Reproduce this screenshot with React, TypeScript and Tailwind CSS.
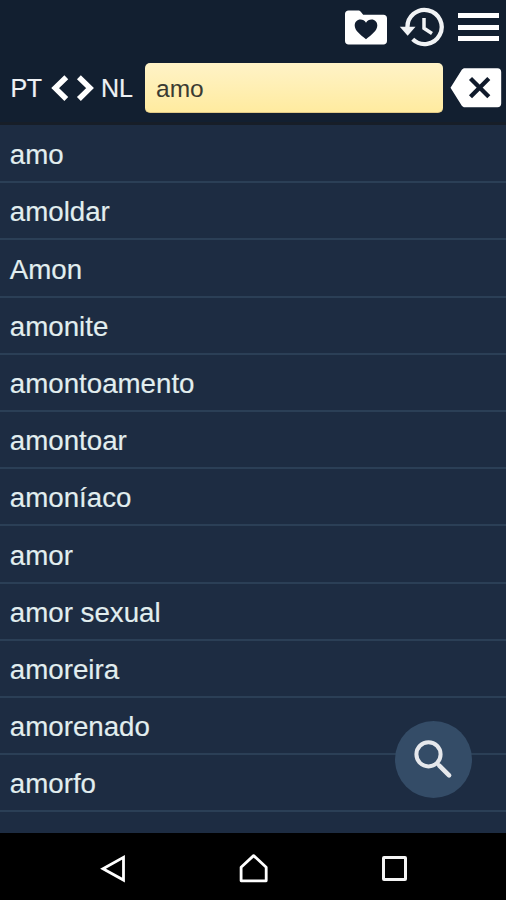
const words = [
  "amo", "amoldar", "Amon", "amonite", "amontoamento", "amontoar",
  "amoníaco", "amor", "amor sexual", "amoreira", "amorenado", "amorfo",
];

function FavoritesIcon() {
  return (
    <svg className="block h-[35px] w-[44px]" viewBox="0 0 44 35" aria-hidden="true">
      <path d="M4.5 .5h9.5c1.3 0 2 .4 2.8 1.3l2.4 2.9h20.300c2 0 3.500 1.500 3.500 3.500V31c0 2-1.500 3.500-3.500 3.500h-35C2.500 34.500 1 33 1 31V4C1 2 2.500 .5 4.500 .5z" fill="#fff" />
      <path d="M22 29.200C16.500 24.600 10.700 20.500 10.700 15.400c0-3.400 2.500-5.900 5.700-5.900 2.400 0 4.400 1.200 5.600 3.200 1.200-2 3.200-3.200 5.600-3.200 3.200 0 5.700 2.500 5.700 5.900 0 5.100-5.800 9.200-11.300 13.800z" fill="#121e30" />
    </svg>
  );
}

function HistoryIcon() {
  return (
    <svg className="block h-[40px] w-[46px]" viewBox="0 0 46 40" fill="none" stroke="#f1f3f5" aria-hidden="true">
      <path d="M8.500 21a17.100 17.100 0 1 1 5.200 11.300" strokeWidth="4.300" />
      <path d="M.8 19.800h15.700l-7.800 9z" fill="#f1f3f5" stroke="none" />
      <path d="M25 11v10.300l8 5.200" strokeWidth="3.500" />
    </svg>
  );
}

function ClearIcon() {
  return (
    <svg className="block h-[40px] w-[52px]" viewBox="0 0 52 40" aria-hidden="true">
      <path d="M14.800 .2h32.700c2.300 0 3.700 1.500 3.700 3.700v31.700c0 2.200-1.400 3.700-3.700 3.700H14.800c-1.300 0-2.300-.6-3-1.500L.5 19.800 11.800 1.700c.7-.9 1.700-1.500 3-1.500z" fill="#fff" />
      <path d="m20.500 10.500 18.300 18.300m0-18.300L20.500 28.800" fill="none" stroke="#101a2b" strokeWidth="4.300" />
    </svg>
  );
}

export default function App() {
  return (
    <div className="relative flex h-[900px] w-[506px] flex-col overflow-hidden bg-[#1d2c42] font-['Liberation_Sans',Arial,sans-serif]">
      <header className="flex h-[125px] shrink-0 flex-col border-b-[3px] border-[#171e28] bg-[#121f30]">
        <div className="flex h-[62px] justify-end pr-[7px]">
          <button className="mt-[10px] mr-[11px] self-start" aria-label="Favoritos"><FavoritesIcon /></button>
          <button className="mt-[7px] mr-[13px] self-start" aria-label="Histórico"><HistoryIcon /></button>
          <button className="mt-[13px] flex h-[28px] w-[41px] flex-col justify-between self-start" aria-label="Menu">
            <span className="h-[5px] w-full bg-white" />
            <span className="h-[5px] w-full bg-white" />
            <span className="h-[5px] w-full bg-white" />
          </button>
        </div>
        <div className="flex h-[51px] items-center">
          <button className="flex h-full w-[145px] items-center pl-[10.500px] text-[25px] leading-none text-[#eef1f4] [-webkit-text-stroke:0.2px]" aria-label="PT NL">
            <span className="w-[39.500px] pt-px text-left tracking-[-0.5px]">PT</span>
            <svg className="h-[28px] w-[45px]" viewBox="0 0 45 28" fill="none" stroke="#fff" strokeWidth="5.500" aria-hidden="true">
              <path d="M16.300 3.200 5.200 14.100l11.100 10.900M28.900 3.200l11.100 10.900-11.100 10.900" />
            </svg>
            <span className="ml-[6px] pt-px">NL</span>
          </button>
          <div className="flex h-[50px] w-[298px] items-center rounded-[5px] border-b border-[#e0c886] bg-linear-to-b from-[#fff3c7] to-[#ffeb9f] pl-[11px] text-[24.500px] leading-none text-[#3b3b32]">
            <span className="pt-[4px]">amo</span>
          </div>
          <button className="ml-[7px]" aria-label="Limpar"><ClearIcon /></button>
        </div>
      </header>

      <main className="min-h-0 flex-1 overflow-hidden pt-px">
        <ul>
          {words.map((word) => (
            <li key={word} className="flex h-[57.200px] items-center border-b-2 border-[#2b3f56] pl-[9.800px] text-[27.700px] leading-none text-[#e2eeef] [-webkit-text-stroke:0.15px]">
              <span className="pt-[3px]">{word}</span>
            </li>
          ))}
        </ul>
      </main>

      <button className="absolute top-[721px] left-[395px] flex h-[77px] w-[77px] items-center justify-center rounded-full bg-[#344c67]" aria-label="Pesquisar">
        <svg className="h-[40px] w-[40px]" viewBox="0 0 40 40" fill="none" stroke="#e6e8ec" aria-hidden="true">
          <circle cx="14.500" cy="14.300" r="12.100" strokeWidth="4" />
          <path d="m25.300 25.700 9.800 9.700" strokeWidth="4.600" strokeLinecap="round" />
          <path d="m22.500 22.800 4 4" strokeWidth="3" />
        </svg>
      </button>

      <nav className="flex h-[67px] shrink-0 items-center bg-black pt-[4px] pl-[100px]">
        <button className="mr-[111px]" aria-label="Voltar">
          <svg className="block h-[30px] w-[28px]" viewBox="0 0 28 30" fill="none" stroke="#fff" strokeWidth="2.800" aria-hidden="true"><path d="M23.500 3.400v22.700L3 14.800z" /></svg>
        </button>
        <button className="mr-[113px]" aria-label="Início">
          <svg className="block h-[30px] w-[30px]" viewBox="0 0 30 30" fill="none" stroke="#fff" strokeWidth="2.800" strokeLinejoin="round" aria-hidden="true"><path d="M2.100 26.800V13.200L14.600 1.600l12.600 11.600v13.600z" /></svg>
        </button>
        <span className="block h-[25px] w-[25px] rounded-[2px] border-[3px] border-[#f4f4f4]" />
      </nav>
    </div>
  );
}
